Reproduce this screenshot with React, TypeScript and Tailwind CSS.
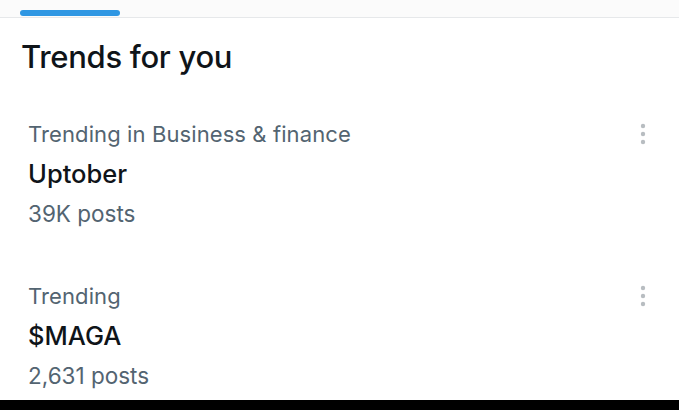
import React from 'react';

const TRENDS = [
  { id: 'uptober', category: 'Trending in Business & finance', title: 'Uptober', posts: '39K posts' },
  { id: 'maga', category: 'Trending', title: '$MAGA', posts: '2,631 posts' },
];

function MoreDots() {
  return (
    <svg width="8" height="24" viewBox="0 0 8 24" className="text-[#b8bdc1]">
      <circle cx="4" cy="4" r="2.2" fill="currentColor" />
      <circle cx="4" cy="12" r="2.2" fill="currentColor" />
      <circle cx="4" cy="20" r="2.2" fill="currentColor" />
    </svg>
  );
}

export default function App() {
  return (
    <div
      className="w-[679px] h-[410px] flex flex-col bg-white overflow-hidden"
      style={{ fontFamily: 'Inter, "Noto Sans", sans-serif' }}
    >
      <div className="h-[18px] border-b border-[#e6e8ea] bg-[#fbfbfb] pl-[20px] pt-[10px]">
        <div className="w-[100px] h-[6px] rounded-full bg-[#2f97e3]" />
      </div>

      <h1 className="mt-[19px] pl-[21px] text-[31px] leading-[40px] font-medium text-[#0f1419] tracking-[-0.3px]">
        Trends for you
      </h1>

      <div className="mt-[37px] flex flex-col gap-[42px]">
        {TRENDS.map(trend => (
          <div key={trend.id} className="flex items-start justify-between pl-[28px] pr-[32px]">
            <div className="flex flex-col">
              <div className="text-[22px] leading-[40px] text-[#536471] tracking-[0.1px]">{trend.category}</div>
              <div className="text-[25.5px] leading-[40px] font-medium text-[#0f1419]">{trend.title}</div>
              <div className="text-[22.5px] leading-[40px] text-[#536471]">{trend.posts}</div>
            </div>
            <div className="pt-[8px]">
              <MoreDots />
            </div>
          </div>
        ))}
      </div>

      <div className="mt-auto h-[10px] bg-black" />
    </div>
  );
}
